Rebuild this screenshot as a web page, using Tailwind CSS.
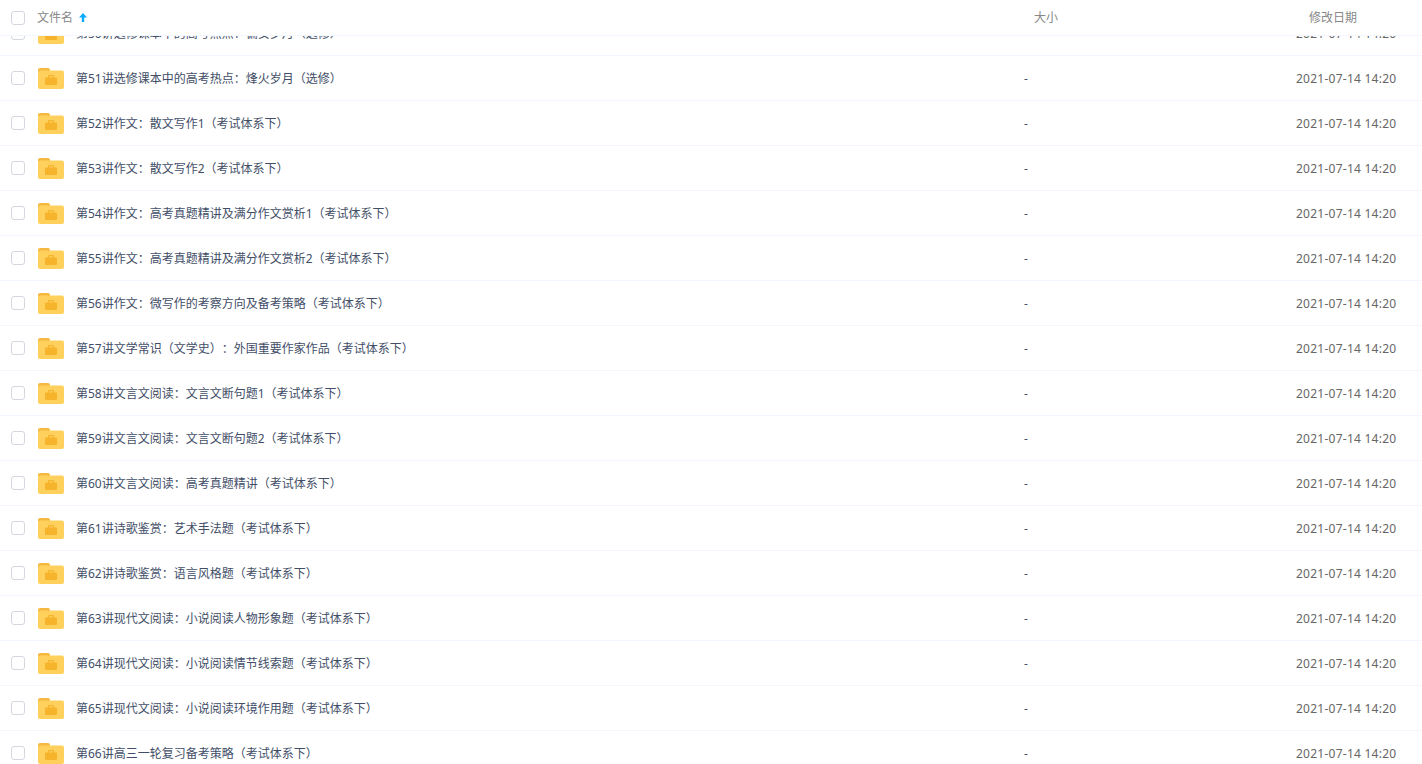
<!DOCTYPE html>
<html lang="zh-CN">
<head>
<meta charset="utf-8">
<script src="https://cdn.jsdelivr.net/npm/@tailwindcss/browser@4"></script>
<title>文件列表</title>
</head>
<body class="bg-white overflow-hidden font-['Noto_Sans','Noto_Sans_CJK_SC',sans-serif] text-xs [text-spacing-trim:space-all]">
<div class="h-[764px] flex flex-col overflow-hidden">
  <header class="relative z-10 h-[36px] shrink-0 flex items-center bg-white border-b border-[#f2f6fd] text-[#888]">
    <span class="ml-[11px] w-[14px] h-[14px] border border-[#d4d7de] rounded-[3px]"></span>
    <span class="ml-[12px] w-[997px] flex items-center gap-[6px]">文件名
      <svg class="-mt-[1px]" width="8" height="9" viewBox="0 0 8 9"><path d="M4 0 L8 4.500 H5.200 V9 H2.800 V4.500 H0 Z" fill="#09aaff"/></svg>
    </span>
    <span class="w-[275px]">大小</span>
    <span>修改日期</span>
  </header>
  <main class="flex-1 overflow-hidden -mt-[25px] text-[#424e67]">
    <div class="h-[45px] flex items-center border-b border-[#f2f6fd]"><span class="ml-[11px] w-[14px] h-[14px] border border-[#d4d7de] rounded-[3px]"></span><svg class="ml-[13px] mt-px" width="26" height="21" viewBox="0 0 26 21"><path d="M0 2a2 2 0 0 1 2-2h8a2 2 0 0 1 2 2v2H0z" fill="#f5b942"/><rect y="2.500" width="26" height="18.500" rx="2" fill="#ffd15c"/><path fill-rule="evenodd" d="M10 9.500V8a1 1 0 0 1 1-1h4a1 1 0 0 1 1 1v1.500h2a1 1 0 0 1 1 1V16a1 1 0 0 1-1 1H8a1 1 0 0 1-1-1v-5.500a1 1 0 0 1 1-1zM11.200 9.500h3.600V8.200h-3.600z" fill="#f6b42c"/></svg><span class="ml-[12px] pt-[2px] w-[948px] truncate">第50讲选修课本中的高考热点：偏安岁月（选修）</span><span class="pt-[2px] w-[272px]">-</span><span class="pt-[2px] text-[#666] tracking-[0.25px]">2021-07-14 14:20</span></div>
    <div class="h-[45px] flex items-center border-b border-[#f2f6fd]"><span class="ml-[11px] w-[14px] h-[14px] border border-[#d4d7de] rounded-[3px]"></span><svg class="ml-[13px] mt-px" width="26" height="21" viewBox="0 0 26 21"><path d="M0 2a2 2 0 0 1 2-2h8a2 2 0 0 1 2 2v2H0z" fill="#f5b942"/><rect y="2.500" width="26" height="18.500" rx="2" fill="#ffd15c"/><path fill-rule="evenodd" d="M10 9.500V8a1 1 0 0 1 1-1h4a1 1 0 0 1 1 1v1.500h2a1 1 0 0 1 1 1V16a1 1 0 0 1-1 1H8a1 1 0 0 1-1-1v-5.500a1 1 0 0 1 1-1zM11.200 9.500h3.600V8.200h-3.600z" fill="#f6b42c"/></svg><span class="ml-[12px] pt-[2px] w-[948px] truncate">第51讲选修课本中的高考热点：烽火岁月（选修）</span><span class="pt-[2px] w-[272px]">-</span><span class="pt-[2px] text-[#666] tracking-[0.25px]">2021-07-14 14:20</span></div>
    <div class="h-[45px] flex items-center border-b border-[#f2f6fd]"><span class="ml-[11px] w-[14px] h-[14px] border border-[#d4d7de] rounded-[3px]"></span><svg class="ml-[13px] mt-px" width="26" height="21" viewBox="0 0 26 21"><path d="M0 2a2 2 0 0 1 2-2h8a2 2 0 0 1 2 2v2H0z" fill="#f5b942"/><rect y="2.500" width="26" height="18.500" rx="2" fill="#ffd15c"/><path fill-rule="evenodd" d="M10 9.500V8a1 1 0 0 1 1-1h4a1 1 0 0 1 1 1v1.500h2a1 1 0 0 1 1 1V16a1 1 0 0 1-1 1H8a1 1 0 0 1-1-1v-5.500a1 1 0 0 1 1-1zM11.200 9.500h3.600V8.200h-3.600z" fill="#f6b42c"/></svg><span class="ml-[12px] pt-[2px] w-[948px] truncate">第52讲作文：散文写作1（考试体系下）</span><span class="pt-[2px] w-[272px]">-</span><span class="pt-[2px] text-[#666] tracking-[0.25px]">2021-07-14 14:20</span></div>
    <div class="h-[45px] flex items-center border-b border-[#f2f6fd]"><span class="ml-[11px] w-[14px] h-[14px] border border-[#d4d7de] rounded-[3px]"></span><svg class="ml-[13px] mt-px" width="26" height="21" viewBox="0 0 26 21"><path d="M0 2a2 2 0 0 1 2-2h8a2 2 0 0 1 2 2v2H0z" fill="#f5b942"/><rect y="2.500" width="26" height="18.500" rx="2" fill="#ffd15c"/><path fill-rule="evenodd" d="M10 9.500V8a1 1 0 0 1 1-1h4a1 1 0 0 1 1 1v1.500h2a1 1 0 0 1 1 1V16a1 1 0 0 1-1 1H8a1 1 0 0 1-1-1v-5.500a1 1 0 0 1 1-1zM11.200 9.500h3.600V8.200h-3.600z" fill="#f6b42c"/></svg><span class="ml-[12px] pt-[2px] w-[948px] truncate">第53讲作文：散文写作2（考试体系下）</span><span class="pt-[2px] w-[272px]">-</span><span class="pt-[2px] text-[#666] tracking-[0.25px]">2021-07-14 14:20</span></div>
    <div class="h-[45px] flex items-center border-b border-[#f2f6fd]"><span class="ml-[11px] w-[14px] h-[14px] border border-[#d4d7de] rounded-[3px]"></span><svg class="ml-[13px] mt-px" width="26" height="21" viewBox="0 0 26 21"><path d="M0 2a2 2 0 0 1 2-2h8a2 2 0 0 1 2 2v2H0z" fill="#f5b942"/><rect y="2.500" width="26" height="18.500" rx="2" fill="#ffd15c"/><path fill-rule="evenodd" d="M10 9.500V8a1 1 0 0 1 1-1h4a1 1 0 0 1 1 1v1.500h2a1 1 0 0 1 1 1V16a1 1 0 0 1-1 1H8a1 1 0 0 1-1-1v-5.500a1 1 0 0 1 1-1zM11.200 9.500h3.600V8.200h-3.600z" fill="#f6b42c"/></svg><span class="ml-[12px] pt-[2px] w-[948px] truncate">第54讲作文：高考真题精讲及满分作文赏析1（考试体系下）</span><span class="pt-[2px] w-[272px]">-</span><span class="pt-[2px] text-[#666] tracking-[0.25px]">2021-07-14 14:20</span></div>
    <div class="h-[45px] flex items-center border-b border-[#f2f6fd]"><span class="ml-[11px] w-[14px] h-[14px] border border-[#d4d7de] rounded-[3px]"></span><svg class="ml-[13px] mt-px" width="26" height="21" viewBox="0 0 26 21"><path d="M0 2a2 2 0 0 1 2-2h8a2 2 0 0 1 2 2v2H0z" fill="#f5b942"/><rect y="2.500" width="26" height="18.500" rx="2" fill="#ffd15c"/><path fill-rule="evenodd" d="M10 9.500V8a1 1 0 0 1 1-1h4a1 1 0 0 1 1 1v1.500h2a1 1 0 0 1 1 1V16a1 1 0 0 1-1 1H8a1 1 0 0 1-1-1v-5.500a1 1 0 0 1 1-1zM11.200 9.500h3.600V8.200h-3.600z" fill="#f6b42c"/></svg><span class="ml-[12px] pt-[2px] w-[948px] truncate">第55讲作文：高考真题精讲及满分作文赏析2（考试体系下）</span><span class="pt-[2px] w-[272px]">-</span><span class="pt-[2px] text-[#666] tracking-[0.25px]">2021-07-14 14:20</span></div>
    <div class="h-[45px] flex items-center border-b border-[#f2f6fd]"><span class="ml-[11px] w-[14px] h-[14px] border border-[#d4d7de] rounded-[3px]"></span><svg class="ml-[13px] mt-px" width="26" height="21" viewBox="0 0 26 21"><path d="M0 2a2 2 0 0 1 2-2h8a2 2 0 0 1 2 2v2H0z" fill="#f5b942"/><rect y="2.500" width="26" height="18.500" rx="2" fill="#ffd15c"/><path fill-rule="evenodd" d="M10 9.500V8a1 1 0 0 1 1-1h4a1 1 0 0 1 1 1v1.500h2a1 1 0 0 1 1 1V16a1 1 0 0 1-1 1H8a1 1 0 0 1-1-1v-5.500a1 1 0 0 1 1-1zM11.200 9.500h3.600V8.200h-3.600z" fill="#f6b42c"/></svg><span class="ml-[12px] pt-[2px] w-[948px] truncate">第56讲作文：微写作的考察方向及备考策略（考试体系下）</span><span class="pt-[2px] w-[272px]">-</span><span class="pt-[2px] text-[#666] tracking-[0.25px]">2021-07-14 14:20</span></div>
    <div class="h-[45px] flex items-center border-b border-[#f2f6fd]"><span class="ml-[11px] w-[14px] h-[14px] border border-[#d4d7de] rounded-[3px]"></span><svg class="ml-[13px] mt-px" width="26" height="21" viewBox="0 0 26 21"><path d="M0 2a2 2 0 0 1 2-2h8a2 2 0 0 1 2 2v2H0z" fill="#f5b942"/><rect y="2.500" width="26" height="18.500" rx="2" fill="#ffd15c"/><path fill-rule="evenodd" d="M10 9.500V8a1 1 0 0 1 1-1h4a1 1 0 0 1 1 1v1.500h2a1 1 0 0 1 1 1V16a1 1 0 0 1-1 1H8a1 1 0 0 1-1-1v-5.500a1 1 0 0 1 1-1zM11.200 9.500h3.600V8.200h-3.600z" fill="#f6b42c"/></svg><span class="ml-[12px] pt-[2px] w-[948px] truncate">第57讲文学常识（文学史）：外国重要作家作品（考试体系下）</span><span class="pt-[2px] w-[272px]">-</span><span class="pt-[2px] text-[#666] tracking-[0.25px]">2021-07-14 14:20</span></div>
    <div class="h-[45px] flex items-center border-b border-[#f2f6fd]"><span class="ml-[11px] w-[14px] h-[14px] border border-[#d4d7de] rounded-[3px]"></span><svg class="ml-[13px] mt-px" width="26" height="21" viewBox="0 0 26 21"><path d="M0 2a2 2 0 0 1 2-2h8a2 2 0 0 1 2 2v2H0z" fill="#f5b942"/><rect y="2.500" width="26" height="18.500" rx="2" fill="#ffd15c"/><path fill-rule="evenodd" d="M10 9.500V8a1 1 0 0 1 1-1h4a1 1 0 0 1 1 1v1.500h2a1 1 0 0 1 1 1V16a1 1 0 0 1-1 1H8a1 1 0 0 1-1-1v-5.500a1 1 0 0 1 1-1zM11.200 9.500h3.600V8.200h-3.600z" fill="#f6b42c"/></svg><span class="ml-[12px] pt-[2px] w-[948px] truncate">第58讲文言文阅读：文言文断句题1（考试体系下）</span><span class="pt-[2px] w-[272px]">-</span><span class="pt-[2px] text-[#666] tracking-[0.25px]">2021-07-14 14:20</span></div>
    <div class="h-[45px] flex items-center border-b border-[#f2f6fd]"><span class="ml-[11px] w-[14px] h-[14px] border border-[#d4d7de] rounded-[3px]"></span><svg class="ml-[13px] mt-px" width="26" height="21" viewBox="0 0 26 21"><path d="M0 2a2 2 0 0 1 2-2h8a2 2 0 0 1 2 2v2H0z" fill="#f5b942"/><rect y="2.500" width="26" height="18.500" rx="2" fill="#ffd15c"/><path fill-rule="evenodd" d="M10 9.500V8a1 1 0 0 1 1-1h4a1 1 0 0 1 1 1v1.500h2a1 1 0 0 1 1 1V16a1 1 0 0 1-1 1H8a1 1 0 0 1-1-1v-5.500a1 1 0 0 1 1-1zM11.200 9.500h3.600V8.200h-3.600z" fill="#f6b42c"/></svg><span class="ml-[12px] pt-[2px] w-[948px] truncate">第59讲文言文阅读：文言文断句题2（考试体系下）</span><span class="pt-[2px] w-[272px]">-</span><span class="pt-[2px] text-[#666] tracking-[0.25px]">2021-07-14 14:20</span></div>
    <div class="h-[45px] flex items-center border-b border-[#f2f6fd]"><span class="ml-[11px] w-[14px] h-[14px] border border-[#d4d7de] rounded-[3px]"></span><svg class="ml-[13px] mt-px" width="26" height="21" viewBox="0 0 26 21"><path d="M0 2a2 2 0 0 1 2-2h8a2 2 0 0 1 2 2v2H0z" fill="#f5b942"/><rect y="2.500" width="26" height="18.500" rx="2" fill="#ffd15c"/><path fill-rule="evenodd" d="M10 9.500V8a1 1 0 0 1 1-1h4a1 1 0 0 1 1 1v1.500h2a1 1 0 0 1 1 1V16a1 1 0 0 1-1 1H8a1 1 0 0 1-1-1v-5.500a1 1 0 0 1 1-1zM11.200 9.500h3.600V8.200h-3.600z" fill="#f6b42c"/></svg><span class="ml-[12px] pt-[2px] w-[948px] truncate">第60讲文言文阅读：高考真题精讲（考试体系下）</span><span class="pt-[2px] w-[272px]">-</span><span class="pt-[2px] text-[#666] tracking-[0.25px]">2021-07-14 14:20</span></div>
    <div class="h-[45px] flex items-center border-b border-[#f2f6fd]"><span class="ml-[11px] w-[14px] h-[14px] border border-[#d4d7de] rounded-[3px]"></span><svg class="ml-[13px] mt-px" width="26" height="21" viewBox="0 0 26 21"><path d="M0 2a2 2 0 0 1 2-2h8a2 2 0 0 1 2 2v2H0z" fill="#f5b942"/><rect y="2.500" width="26" height="18.500" rx="2" fill="#ffd15c"/><path fill-rule="evenodd" d="M10 9.500V8a1 1 0 0 1 1-1h4a1 1 0 0 1 1 1v1.500h2a1 1 0 0 1 1 1V16a1 1 0 0 1-1 1H8a1 1 0 0 1-1-1v-5.500a1 1 0 0 1 1-1zM11.200 9.500h3.600V8.200h-3.600z" fill="#f6b42c"/></svg><span class="ml-[12px] pt-[2px] w-[948px] truncate">第61讲诗歌鉴赏：艺术手法题（考试体系下）</span><span class="pt-[2px] w-[272px]">-</span><span class="pt-[2px] text-[#666] tracking-[0.25px]">2021-07-14 14:20</span></div>
    <div class="h-[45px] flex items-center border-b border-[#f2f6fd]"><span class="ml-[11px] w-[14px] h-[14px] border border-[#d4d7de] rounded-[3px]"></span><svg class="ml-[13px] mt-px" width="26" height="21" viewBox="0 0 26 21"><path d="M0 2a2 2 0 0 1 2-2h8a2 2 0 0 1 2 2v2H0z" fill="#f5b942"/><rect y="2.500" width="26" height="18.500" rx="2" fill="#ffd15c"/><path fill-rule="evenodd" d="M10 9.500V8a1 1 0 0 1 1-1h4a1 1 0 0 1 1 1v1.500h2a1 1 0 0 1 1 1V16a1 1 0 0 1-1 1H8a1 1 0 0 1-1-1v-5.500a1 1 0 0 1 1-1zM11.200 9.500h3.600V8.200h-3.600z" fill="#f6b42c"/></svg><span class="ml-[12px] pt-[2px] w-[948px] truncate">第62讲诗歌鉴赏：语言风格题（考试体系下）</span><span class="pt-[2px] w-[272px]">-</span><span class="pt-[2px] text-[#666] tracking-[0.25px]">2021-07-14 14:20</span></div>
    <div class="h-[45px] flex items-center border-b border-[#f2f6fd]"><span class="ml-[11px] w-[14px] h-[14px] border border-[#d4d7de] rounded-[3px]"></span><svg class="ml-[13px] mt-px" width="26" height="21" viewBox="0 0 26 21"><path d="M0 2a2 2 0 0 1 2-2h8a2 2 0 0 1 2 2v2H0z" fill="#f5b942"/><rect y="2.500" width="26" height="18.500" rx="2" fill="#ffd15c"/><path fill-rule="evenodd" d="M10 9.500V8a1 1 0 0 1 1-1h4a1 1 0 0 1 1 1v1.500h2a1 1 0 0 1 1 1V16a1 1 0 0 1-1 1H8a1 1 0 0 1-1-1v-5.500a1 1 0 0 1 1-1zM11.200 9.500h3.600V8.200h-3.600z" fill="#f6b42c"/></svg><span class="ml-[12px] pt-[2px] w-[948px] truncate">第63讲现代文阅读：小说阅读人物形象题（考试体系下）</span><span class="pt-[2px] w-[272px]">-</span><span class="pt-[2px] text-[#666] tracking-[0.25px]">2021-07-14 14:20</span></div>
    <div class="h-[45px] flex items-center border-b border-[#f2f6fd]"><span class="ml-[11px] w-[14px] h-[14px] border border-[#d4d7de] rounded-[3px]"></span><svg class="ml-[13px] mt-px" width="26" height="21" viewBox="0 0 26 21"><path d="M0 2a2 2 0 0 1 2-2h8a2 2 0 0 1 2 2v2H0z" fill="#f5b942"/><rect y="2.500" width="26" height="18.500" rx="2" fill="#ffd15c"/><path fill-rule="evenodd" d="M10 9.500V8a1 1 0 0 1 1-1h4a1 1 0 0 1 1 1v1.500h2a1 1 0 0 1 1 1V16a1 1 0 0 1-1 1H8a1 1 0 0 1-1-1v-5.500a1 1 0 0 1 1-1zM11.200 9.500h3.600V8.200h-3.600z" fill="#f6b42c"/></svg><span class="ml-[12px] pt-[2px] w-[948px] truncate">第64讲现代文阅读：小说阅读情节线索题（考试体系下）</span><span class="pt-[2px] w-[272px]">-</span><span class="pt-[2px] text-[#666] tracking-[0.25px]">2021-07-14 14:20</span></div>
    <div class="h-[45px] flex items-center border-b border-[#f2f6fd]"><span class="ml-[11px] w-[14px] h-[14px] border border-[#d4d7de] rounded-[3px]"></span><svg class="ml-[13px] mt-px" width="26" height="21" viewBox="0 0 26 21"><path d="M0 2a2 2 0 0 1 2-2h8a2 2 0 0 1 2 2v2H0z" fill="#f5b942"/><rect y="2.500" width="26" height="18.500" rx="2" fill="#ffd15c"/><path fill-rule="evenodd" d="M10 9.500V8a1 1 0 0 1 1-1h4a1 1 0 0 1 1 1v1.500h2a1 1 0 0 1 1 1V16a1 1 0 0 1-1 1H8a1 1 0 0 1-1-1v-5.500a1 1 0 0 1 1-1zM11.200 9.500h3.600V8.200h-3.600z" fill="#f6b42c"/></svg><span class="ml-[12px] pt-[2px] w-[948px] truncate">第65讲现代文阅读：小说阅读环境作用题（考试体系下）</span><span class="pt-[2px] w-[272px]">-</span><span class="pt-[2px] text-[#666] tracking-[0.25px]">2021-07-14 14:20</span></div>
    <div class="h-[45px] flex items-center border-b border-[#f2f6fd]"><span class="ml-[11px] w-[14px] h-[14px] border border-[#d4d7de] rounded-[3px]"></span><svg class="ml-[13px] mt-px" width="26" height="21" viewBox="0 0 26 21"><path d="M0 2a2 2 0 0 1 2-2h8a2 2 0 0 1 2 2v2H0z" fill="#f5b942"/><rect y="2.500" width="26" height="18.500" rx="2" fill="#ffd15c"/><path fill-rule="evenodd" d="M10 9.500V8a1 1 0 0 1 1-1h4a1 1 0 0 1 1 1v1.500h2a1 1 0 0 1 1 1V16a1 1 0 0 1-1 1H8a1 1 0 0 1-1-1v-5.500a1 1 0 0 1 1-1zM11.200 9.500h3.600V8.200h-3.600z" fill="#f6b42c"/></svg><span class="ml-[12px] pt-[2px] w-[948px] truncate">第66讲高三一轮复习备考策略（考试体系下）</span><span class="pt-[2px] w-[272px]">-</span><span class="pt-[2px] text-[#666] tracking-[0.25px]">2021-07-14 14:20</span></div>
  </main>
</div>
</body>
</html>
